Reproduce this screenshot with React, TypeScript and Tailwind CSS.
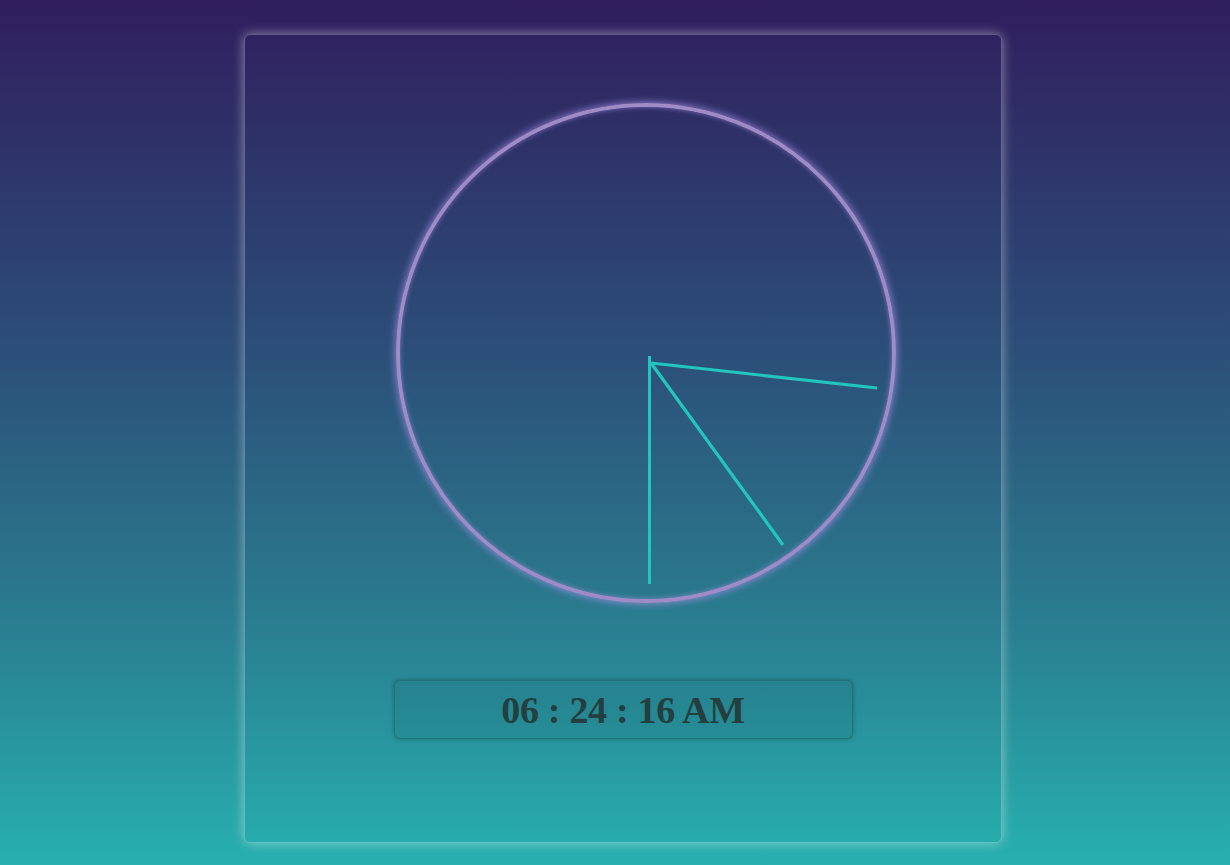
export default function App() {
  return (
    <div className="min-h-[865px] w-full bg-[linear-gradient(to_bottom,#301e5e_0%,#2c4e78_40%,#2a7a8e_70%,#27b0ae_100%)] pl-4 pt-[34px] flex justify-center">
      {/* Card */}
      <div className="w-[758px] h-[809px] rounded-md border border-white/25 shadow-[0_0_12px_rgba(255,255,255,0.45)] flex flex-col items-center">
        {/* Clock face */}
        <div className="relative mt-[68px] ml-[45px] w-[500px] h-[500px] rounded-full border-4 border-[#9f8bc6] shadow-[0_0_8px_rgba(170,150,235,0.9),inset_0_0_5px_rgba(170,150,235,0.6)]">
          <svg className="absolute inset-0" width="492" height="492" viewBox="0 0 492 492">
            <line x1="249.5" y1="249" x2="249.5" y2="477" stroke="#22c6be" strokeWidth="3" />
            <line x1="251" y1="256" x2="477" y2="281" stroke="#22c6be" strokeWidth="3.2" />
            <line x1="251" y1="256" x2="383" y2="438" stroke="#22c6be" strokeWidth="3.2" />
          </svg>
        </div>

        {/* Digital time */}
        <div className="mt-[77px] w-[459px] h-[59px] rounded-md bg-black/5 border border-black/15 shadow-[0_0_4px_rgba(0,0,0,0.3)] flex items-center justify-center">
          <span className="font-['Liberation_Serif',serif] font-bold text-[38px] tracking-[-0.3px] leading-none text-[#243f40]">
            06 : 24 : 16 AM
          </span>
        </div>
      </div>
    </div>
  )
}
